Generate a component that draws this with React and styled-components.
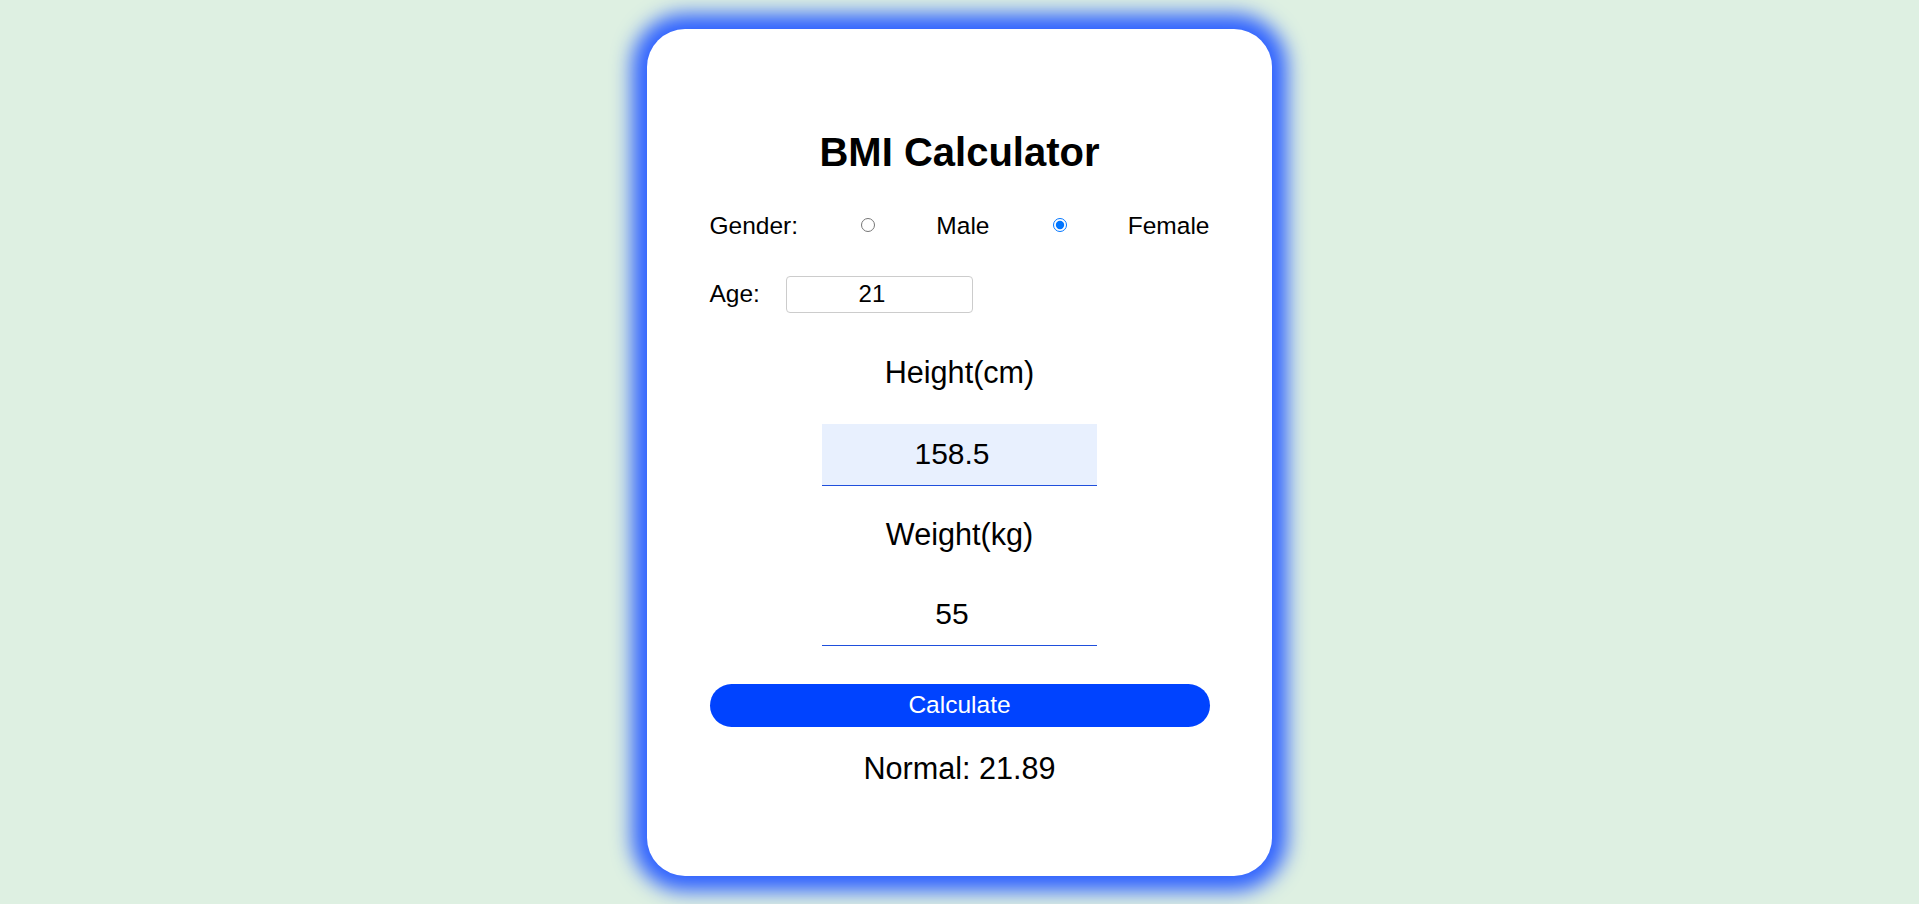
import React, { useState } from 'react';
import styled, { createGlobalStyle } from 'styled-components';

const GlobalStyle = createGlobalStyle`
  html, body {
    margin: 0;
    padding: 0;
    background: #def0e2;
    font-family: "Liberation Sans", Arial, sans-serif;
  }
`;

const Page = styled.div`
  min-height: 100vh;
  display: flex;
  align-items: center;
  justify-content: center;
`;

const Card = styled.div`
  box-sizing: border-box;
  width: 625px;
  padding: 100px 62.5px 90px;
  background: #ffffff;
  border-radius: 38px;
  box-shadow: 0 0 20px 15px #2f62ff;
  display: flex;
  flex-direction: column;
`;

const Title = styled.h1`
  margin: 0;
  font-size: 40px;
  line-height: 46px;
  font-weight: bold;
  text-align: center;
  color: #000;
`;

const GenderRow = styled.div`
  margin-top: 37px;
  height: 28px;
  display: flex;
  align-items: center;
  justify-content: space-between;
`;

const Label = styled.label`
  font-size: 24.5px;
  line-height: 28px;
  color: #000;
`;

const Radio = styled.input`
  margin: 0 3px 2px 5px;
  width: 14px;
  height: 14px;
`;

const AgeRow = styled.div`
  margin-top: 36px;
  display: flex;
  align-items: center;
`;

const AgeInput = styled.input`
  box-sizing: border-box;
  margin-left: 26px;
  width: 187px;
  height: 37px;
  padding: 0 2px;
  border: 1px solid #cccccc;
  border-radius: 4px;
  font-family: "Liberation Sans", Arial, sans-serif;
  font-size: 24px;
  text-align: center;
  color: #000;
  outline: none;
`;

const FieldLabel = styled.label`
  margin-top: ${(p) => p.$gap}px;
  font-size: 30.6px;
  line-height: 35px;
  text-align: center;
  color: #000;
`;

const MeasureInput = styled.input`
  box-sizing: border-box;
  align-self: center;
  margin-top: ${(p) => p.$gap}px;
  width: 275px;
  height: 62px;
  padding: 0 2px;
  border: none;
  border-bottom: 1px solid #1f4fdc;
  background: ${(p) => (p.$filled ? '#e8f0fe' : '#ffffff')};
  font-family: "Liberation Sans", Arial, sans-serif;
  font-size: 30px;
  text-align: center;
  color: #000;
  outline: none;
`;

const CalcButton = styled.button`
  margin-top: 38px;
  height: 43px;
  border: none;
  border-radius: 22px;
  background: #0043ff;
  color: #ffffff;
  font-family: "Liberation Sans", Arial, sans-serif;
  font-size: 24.5px;
  cursor: pointer;
`;

const Result = styled.div`
  margin-top: 24px;
  font-size: 30.6px;
  line-height: 35px;
  text-align: center;
  color: #000;
`;

function describe(height, weight) {
  const h = parseFloat(height) / 100;
  const w = parseFloat(weight);
  if (!h || !w) return '';
  const bmi = w / (h * h);
  let status = 'Normal';
  if (bmi < 18.5) status = 'Underweight';
  else if (bmi >= 25 && bmi < 30) status = 'Overweight';
  else if (bmi >= 30) status = 'Obese';
  return `${status}: ${bmi.toFixed(2)}`;
}

export default function App() {
  const [gender, setGender] = useState('female');
  const [age, setAge] = useState('21');
  const [height, setHeight] = useState('158.5');
  const [weight, setWeight] = useState('55');
  const [result, setResult] = useState(describe('158.5', '55'));

  return (
    <>
      <GlobalStyle />
      <Page>
        <Card>
          <Title>BMI Calculator</Title>
          <GenderRow>
            <Label>Gender:</Label>
            <Radio
              type="radio"
              name="gender"
              checked={gender === 'male'}
              onChange={() => setGender('male')}
            />
            <Label>Male</Label>
            <Radio
              type="radio"
              name="gender"
              checked={gender === 'female'}
              onChange={() => setGender('female')}
            />
            <Label>Female</Label>
          </GenderRow>
          <AgeRow>
            <Label>Age:</Label>
            <AgeInput type="number" value={age} onChange={(e) => setAge(e.target.value)} />
          </AgeRow>
          <FieldLabel $gap={42}>Height(cm)</FieldLabel>
          <MeasureInput
            type="number"
            $gap={34}
            $filled
            value={height}
            onChange={(e) => setHeight(e.target.value)}
          />
          <FieldLabel $gap={31}>Weight(kg)</FieldLabel>
          <MeasureInput
            type="number"
            $gap={32}
            value={weight}
            onChange={(e) => setWeight(e.target.value)}
          />
          <CalcButton onClick={() => setResult(describe(height, weight))}>Calculate</CalcButton>
          <Result>{result}</Result>
        </Card>
      </Page>
    </>
  );
}
